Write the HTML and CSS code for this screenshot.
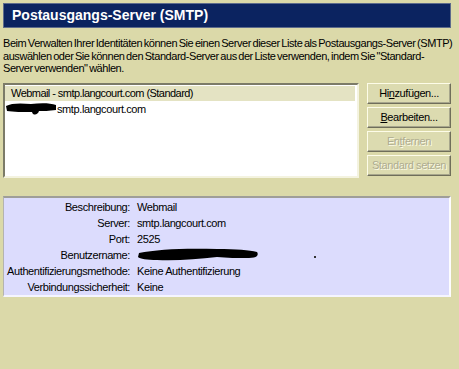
FILE: index.html
```html
<!DOCTYPE html>
<html lang="de">
<head>
<meta charset="utf-8">
<title>Postausgangs-Server (SMTP)</title>
<link rel="stylesheet" href="styles.css">
</head>
<body>
<div class="title">Postausgangs-Server (SMTP)</div>
<p class="desc">Beim Verwalten Ihrer Identitäten können Sie einen Server dieser Liste als Postausgangs-Server (SMTP)<br>auswählen oder Sie können den Standard-Server aus der Liste verwenden, indem Sie "Standard-<br>Server verwenden" wählen.</p>
<div class="main">
  <div class="list">
    <div class="row selected">Webmail - smtp.langcourt.com (Standard)</div>
    <div class="row redacted-row">
      <svg class="scribble1" width="52" height="14" viewBox="0 0 52 14"><path d="M1 4 C 6 1, 16 1, 26 2 C 36 1, 45 1, 51 3 L 51 8 C 44 9, 38 9, 34 9 C 33 13, 28 14, 27 10 C 18 10, 8 10, 2 9 Z" fill="#000"/></svg>
      <span class="after">smtp.langcourt.com</span>
    </div>
  </div>
  <div class="buttons">
    <button class="btn"><span>Hi<u>n</u>zufügen...</span></button>
    <button class="btn"><span><u>B</u>earbeiten...</span></button>
    <button class="btn disabled"><span>En<u>t</u>fernen</span></button>
    <button class="btn disabled"><span>Standard setzen</span></button>
  </div>
</div>
<div class="details">
  <div class="grid">
    <span class="lbl">Beschreibung:</span><span class="val">Webmail</span>
    <span class="lbl">Server:</span><span class="val">smtp.langcourt.com</span>
    <span class="lbl">Port:</span><span class="val">2525</span>
    <span class="lbl">Benutzername:</span><span class="val"><svg class="scribble2" width="122" height="16" viewBox="0 0 122 16"><path d="M2 6 C 20 2, 50 1, 80 2 C 100 2, 112 3, 120 5 C 122 8, 120 11, 112 11 C 100 11, 90 11, 80 10 C 60 12, 40 14, 20 13 C 10 13, 3 12, 1 10 Z" fill="#000"/></svg><i class="dot"></i></span>
    <span class="lbl">Authentifizierungsmethode:</span><span class="val">Keine Authentifizierung</span>
    <span class="lbl">Verbindungssicherheit:</span><span class="val">Keine</span>
  </div>
</div>
</body>
</html>
```
FILE: styles.css
```css
html, body {
  margin: 0;
  padding: 0;
  background: #dbd9a9;
  width: 459px;
  height: 369px;
  overflow: hidden;
}
body {
  font-family: "Liberation Sans", Arial, sans-serif;
  font-size: 11px;
  letter-spacing: -0.4px;
  color: #000;
}
.title {
  margin: 3px 8px 0 3px;
  height: 23px;
  background: #0b2360;
  border: 1px solid #5d6b8c;
  color: #fff;
  font-weight: bold;
  font-size: 14px;
  letter-spacing: 0;
  line-height: 23px;
  padding-left: 8px;
  box-sizing: content-box;
}
.desc {
  margin: 9px 0 0 3px;
  line-height: 12.5px;
  white-space: nowrap;
  letter-spacing: -0.45px;
  word-spacing: -1px;
}
.main {
  display: flex;
  margin: 8px 0 0 3px;
  align-items: flex-start;
}
.list {
  width: 352px;
  height: 90px;
  background: #fff;
  border-top: 2px solid #7c7b68;
  border-left: 2px solid #7c7b68;
  border-right: 2px solid #f4f3e0;
  border-bottom: 2px solid #f4f3e0;
  padding-top: 1px;
  box-sizing: content-box;
}
.row {
  height: 15px;
  line-height: 15px;
  padding-left: 6px;
  display: flex;
  align-items: center;
}
.selected {
  background: #e4e3c3;
  margin-right: 2px;
  letter-spacing: -0.55px;
}
.redacted-row {
  padding-left: 0;
  margin-top: 1px;
}
.scribble1 {
  display: block;
  flex: none;
}
.buttons {
  margin-left: 8px;
  display: flex;
  flex-direction: column;
  gap: 3px;
}
.btn {
  width: 84px;
  height: 21px;
  padding: 0;
  margin: 0;
  font: inherit;
  letter-spacing: -0.4px;
  color: #000;
  background: #dcdbb0;
  border-top: 1px solid #fdfce8;
  border-left: 1px solid #fdfce8;
  border-right: 1px solid #6f6e5a;
  border-bottom: 1px solid #6f6e5a;
  box-shadow: inset -1px -1px 0 #a7a68c;
  display: flex;
  align-items: center;
  justify-content: center;
  white-space: nowrap;
}
.btn.disabled {
  color: #aeac90;
  text-shadow: 1px 1px 0 #fbfae6;
}
.details {
  margin: 18px 8px 0 3px;
  height: 97px;
  background: #dcdcfd;
  border-top: 2px solid #9f9e98;
  border-left: 1px solid #b4b3b0;
  border-right: 2px solid #fdfdff;
  border-bottom: 2px solid #f5f5ff;
}
.grid {
  display: grid;
  grid-template-columns: 126px auto;
  column-gap: 7px;
  grid-auto-rows: 16px;
  padding-top: 1px;
  align-items: center;
}
.lbl {
  text-align: right;
  white-space: nowrap;
}
.val {
  white-space: nowrap;
  position: relative;
  display: flex;
  align-items: center;
}
.scribble2 {
  display: block;
}
.dot {
  position: absolute;
  left: 177px;
  top: 9px;
  width: 2px;
  height: 2px;
  background: #333;
}
```
